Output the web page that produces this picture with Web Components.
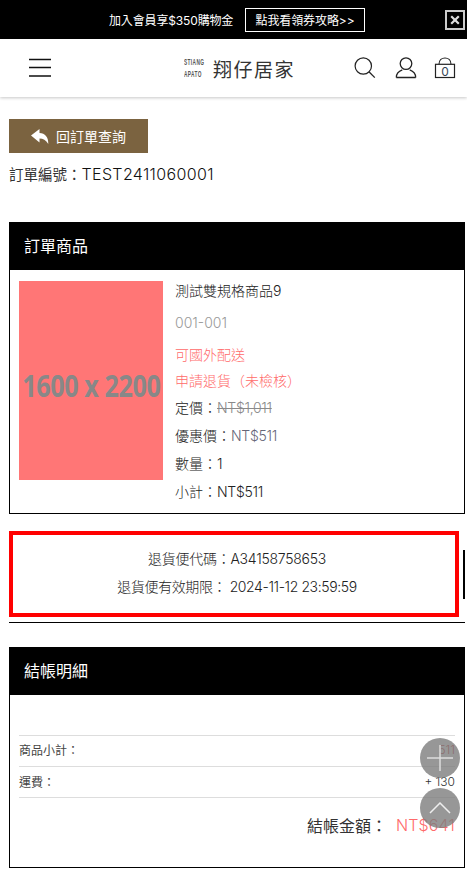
<!DOCTYPE html>
<html lang="zh-Hant">
<head>
<meta charset="utf-8">
<title>訂單明細</title>
<style>
  html, body { margin: 0; padding: 0; background: #fff; }
  body {
    font-family: Inter, "Noto Sans CJK TC", sans-serif;
    color: #222;
    font-size: 14px;
    height: 871px;
    overflow: hidden;
  }
</style>
</head>
<body>
<promo-bar></promo-bar>
<site-header></site-header>
<page-main>
  <back-button>回訂單查詢</back-button>
  <order-number>TEST2411060001</order-number>
  <order-section heading="訂單商品"><product-row></product-row></order-section>
  <return-info></return-info>
  <order-section heading="結帳明細" class="last"><checkout-summary></checkout-summary></order-section>
</page-main>
<float-buttons></float-buttons>

<script>
const define = (name, html) => {
  customElements.define(name, class extends HTMLElement {
    constructor() {
      super();
      this.attachShadow({mode: 'open'}).innerHTML = html;
    }
  });
};

define('promo-bar', `
  <style>
    :host { display: flex; align-items: center; height: 39px; background: #000; color: #fff; font-size: 12px; padding-left: 109px; box-sizing: border-box; }
    .txt { width: 136px; letter-spacing: -.15px; white-space: nowrap; }
    .btn { box-sizing: border-box; width: 120px; height: 24px; border: 1px solid #fff; display: flex; align-items: center; justify-content: center; white-space: nowrap; letter-spacing: -.1px; }
    .close { box-sizing: border-box; width: 20px; height: 20px; margin-left: 80px; border: 2px solid #ccc; display: flex; align-items: center; justify-content: center; }
  </style>
  <span class="txt">加入會員享$350購物金</span>
  <span class="btn">點我看領券攻略&gt;&gt;</span>
  <span class="close"><svg width="10" height="10" viewBox="0 0 10 10"><path d="M1.2 1.2l7.6 7.6M8.800 1.2l-7.600 7.600" stroke="#ddd" stroke-width="2.2"/></svg></span>
`);

define('site-header', `
  <style>
    :host { display: flex; align-items: center; height: 58px; background: #fff; box-shadow: 0 1px 3px rgba(0,0,0,.22); position: relative; box-sizing: border-box; padding-left: 29px; color: #222; }
    .logo { display: flex; align-items: center; margin-left: 133px; width: 135px; flex: none; }
    .en { flex: none; width: 29px; font: bold 9.500px/12.500px "Liberation Sans", sans-serif; color: #555; text-align: left; transform: scaleX(.5); transform-origin: left center; letter-spacing: .8px; white-space: nowrap; }
    .zh { font-size: 19px; letter-spacing: 1.500px; white-space: nowrap; color: #333; }
    svg { display: block; flex: none; }
  </style>
  <svg width="22" height="20" viewBox="0 0 22 20"><path d="M0 1.500h22M0 9.500h22M0 18h22" stroke="#111" stroke-width="1.400"/></svg>
  <div class="logo"><div class="en">STIANG<br>APATO</div><div class="zh">翔仔居家</div></div>
  <svg width="22" height="22" viewBox="0 0 22 22" style="margin-left:35px"><circle cx="9.300" cy="9" r="8.200" fill="none" stroke="#222" stroke-width="1.200"/><path d="M15.200 15l5.600 5.600" stroke="#222" stroke-width="1.300"/></svg>
  <svg width="22" height="22" viewBox="0 0 22 22" style="margin-left:19px"><circle cx="11" cy="6.600" r="5.800" fill="none" stroke="#222" stroke-width="1.300"/><path d="M1.300 20.500c0-4 2.600-6.300 6-7.600M20.700 20.500c0-4-2.600-6.300-6-7.600M1.300 20.500h19.400" fill="none" stroke="#222" stroke-width="1.300"/></svg>
  <svg width="22" height="22" viewBox="0 0 22 22" style="margin-left:17px"><path d="M5 7.300c0-8.500 12-8.500 12 0" fill="none" stroke="#222" stroke-width="1.100"/><rect x="1.500" y="7.300" width="19" height="13.200" fill="none" stroke="#222" stroke-width="1.200"/><text x="11" y="18.600" text-anchor="middle" font-size="12" fill="#345" font-family="Inter, sans-serif">0</text></svg>
`);

define('page-main', `
  <style>
    :host { display: block; padding: 22px 2px 0 9px; }
    ::slotted(order-section.last) { margin-top: 24px; }
  </style>
  <slot></slot>
`);

define('back-button', `
  <style>
    :host { display: flex; align-items: center; justify-content: flex-start; box-sizing: border-box; width: 139px; height: 34px; padding-left: 22px; background: #7b6340; color: #fff; font-size: 14px; }
    svg { margin-right: 7px; flex: none; }
  </style>
  <svg width="18" height="15" viewBox="0 0 18 15"><path d="M0 6.500L8.500 0v4c5.500 0 9 4 8.800 11-2.300-4-5.300-5.500-8.800-5.500v4z" fill="#fff"/></svg>
  <slot></slot>
`);

define('order-number', `
  <style>
    :host { display: block; margin: 11px 0 38px; height: 20px; line-height: 20px; color: #333; font-size: 14.500px; white-space: nowrap; }
    .no { font-size: 16px; letter-spacing: .35px; font-weight: 300; color: #111; }
  </style>
  訂單編號：<span class="no"><slot></slot></span>
`);

define('order-section', `
  <style>
    :host { display: block; box-sizing: border-box; border: 1px solid #000; }
    h2 { margin: 0; height: 47px; background: #000; color: #fff; font-size: 16px; font-weight: 400; line-height: 47px; padding-left: 14px; }
  </style>
  <h2></h2>
  <slot></slot>
`);
customElements.whenDefined('order-section').then(() => {
  document.querySelectorAll('order-section').forEach(el => {
    el.shadowRoot.querySelector('h2').textContent = el.getAttribute('heading');
  });
});

define('product-row', `
  <style>
    :host { display: flex; gap: 12px; padding: 11px 9px 11px; font-size: 14px; color: #222; }
    .pic { box-sizing: border-box; width: 144px; height: 199px; padding-top: 10px; background: #ff7676; color: #888; flex: none; display: flex; align-items: center; justify-content: center; overflow: hidden; font: bold 30px "Open Sans", "Liberation Sans", sans-serif; white-space: nowrap; }
    .pic span { display: inline-block; transform: scaleX(.84); letter-spacing: -.5px; }
    .info div { height: 20px; line-height: 20px; margin-top: 8px; font-weight: 300; white-space: nowrap; }
    .info .name { margin-top: 0; }
    .info .sku { margin-top: 12px; color: #999; }
    .info .red { color: #ff6a6a; margin-top: 11px; font-family: "Noto Sans CJK TC", sans-serif; }
    .info .red + .red { margin-top: 6px; }
    .grey { color: #667; letter-spacing: -.3px; }
    .n { letter-spacing: -.3px; }
    s { color: #8a8a8a; letter-spacing: -.3px; }
  </style>
  <div class="pic"><span>1600 x 2200</span></div>
  <div class="info">
    <div class="name">測試雙規格商品9</div>
    <div class="sku">001-001</div>
    <div class="red">可國外配送</div>
    <div class="red">申請退貨（未檢核）</div>
    <div>定價：<s>NT$1,011</s></div>
    <div>優惠價：<span class="grey">NT$511</span></div>
    <div>數量：1</div>
    <div>小計：<span class="n">NT$511</span></div>
  </div>
`);

define('return-info', `
  <style>
    :host { display: flex; align-items: center; margin-top: 17px; padding-bottom: 5px; border-bottom: 1px solid #000; }
    .box { box-sizing: border-box; width: 450px; height: 86px; border: 4px solid #f00; padding: 0 0 2px 6px; display: flex; flex-direction: column; align-items: center; justify-content: center; gap: 8px; font-size: 14px; color: #222; font-weight: 300; }
    .box div { height: 20px; line-height: 20px; white-space: nowrap; letter-spacing: -.25px; }
    .box .date { letter-spacing: -.4px; }
    .mark { width: 2px; height: 49px; background: #000; margin-left: 4px; }
  </style>
  <div class="box">
    <div>退貨便代碼：A34158758653</div>
    <div class="date">退貨便有效期限： 2024-11-12 23:59:59</div>
  </div>
  <div class="mark"></div>
`);

define('checkout-summary', `
  <style>
    :host { display: block; box-sizing: border-box; height: 172px; padding: 40px 9px 0; font-size: 12px; color: #444; }
    .row { display: flex; justify-content: space-between; align-items: center; box-sizing: border-box; height: 31px; padding-bottom: 3px; border-top: 1px solid #ddd; }
    .row.ship { padding-bottom: 1px; }
    .row.end { height: 0; padding: 0; }
    .val { color: #333; font-weight: 300; }
    .red { color: #c33; }
    .total { display: flex; justify-content: flex-end; align-items: center; gap: 9px; margin-top: 16px; height: 22px; font-size: 16px; color: #333; }
    .total b { font-weight: 300; color: #ff6a6a; letter-spacing: .15px; }
  </style>
  <div class="row"><span>商品小計：</span><span class="val red">511</span></div>
  <div class="row ship"><span>運費：</span><span class="val">+ 130</span></div>
  <div class="row end"></div>
  <div class="total"><span>結帳金額：</span><b>NT$641</b></div>
`);

define('float-buttons', `
  <style>
    :host { position: fixed; left: 420px; top: 738px; display: flex; flex-direction: column; gap: 10px; }
    span { width: 40px; height: 40px; border-radius: 50%; background: rgba(125,125,125,.8); display: flex; align-items: center; justify-content: center; }
  </style>
  <span><svg width="28" height="28" viewBox="0 0 28 28"><path d="M1 14h26M14 1v26" stroke="#ddd" stroke-width="1.500"/></svg></span>
  <span><svg width="22" height="12" viewBox="0 0 22 12"><path d="M1 11L11 1l10 10" fill="none" stroke="#eee" stroke-width="1.500"/></svg></span>
`);
</script>
</body>
</html>
